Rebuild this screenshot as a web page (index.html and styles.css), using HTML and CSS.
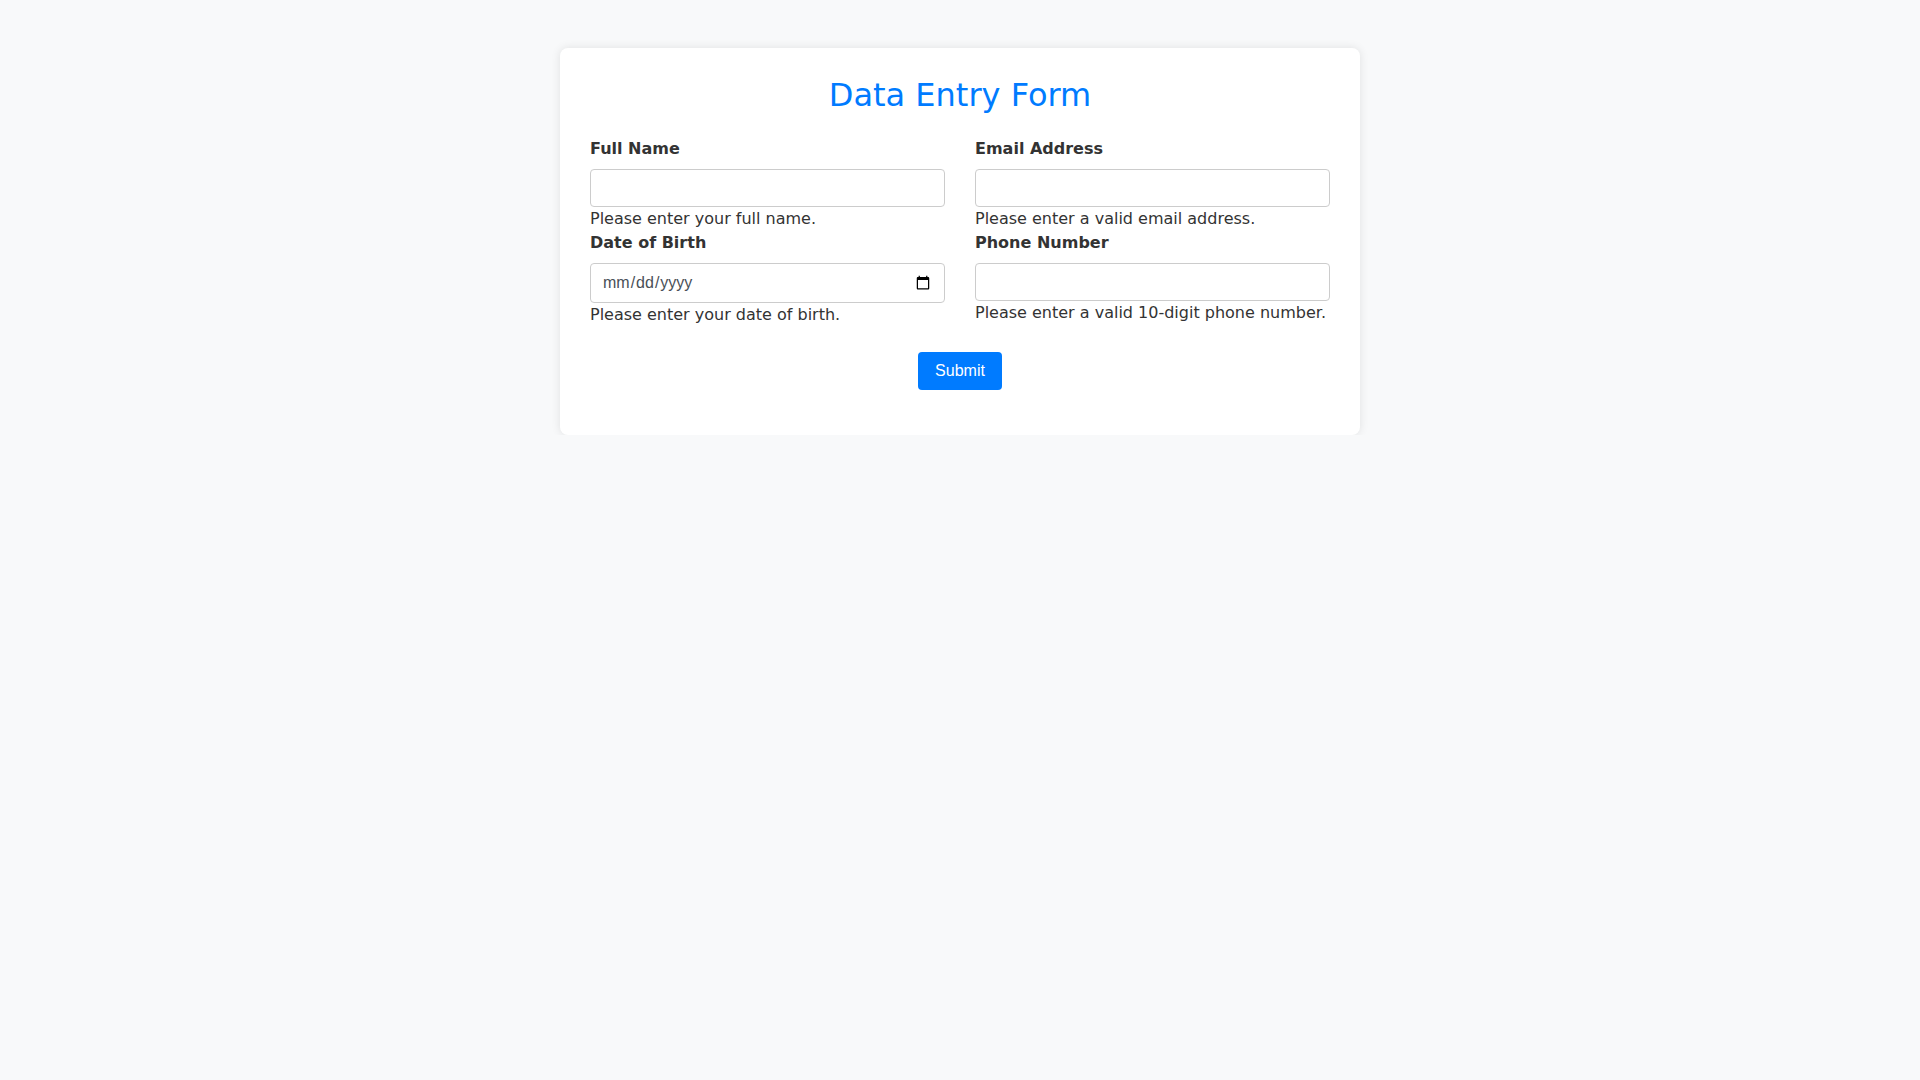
FILE: index.html
```html
<!DOCTYPE html>
<html lang="en">
<head>
<meta charset="utf-8">
<title>Data Entry Form</title>
<link rel="stylesheet" href="styles.css">
</head>
<body>
<div class="card">
  <h2 class="title">Data Entry Form</h2>
  <form class="form">
    <div class="grid">
      <div class="group">
        <label class="label" for="name">Full Name</label>
        <input class="field" type="text" id="name">
        <div class="help">Please enter your full name.</div>
      </div>
      <div class="group">
        <label class="label" for="email">Email Address</label>
        <input class="field" type="email" id="email">
        <div class="help">Please enter a valid email address.</div>
      </div>
      <div class="group">
        <label class="label" for="dob">Date of Birth</label>
        <input class="field" type="date" id="dob">
        <div class="help">Please enter your date of birth.</div>
      </div>
      <div class="group">
        <label class="label" for="phone">Phone Number</label>
        <input class="field" type="tel" id="phone">
        <div class="help">Please enter a valid 10-digit phone number.</div>
      </div>
    </div>
    <div class="actions">
      <button class="submit" type="button">Submit</button>
    </div>
  </form>
</div>
</body>
</html>
```

FILE: styles.css
```css
html, body {
  margin: 0;
  padding: 0;
}

body {
  background: #f8f9fa;
  font-family: "DejaVu Sans", Verdana, sans-serif;
  font-size: 16px;
  line-height: 1.5;
  color: #333333;
}

.card {
  box-sizing: border-box;
  width: 800px;
  margin: 48px auto 0;
  padding: 27.5px 30px 45.5px;
  background: #ffffff;
  border-radius: 8px;
  box-shadow: 0 0 10px rgba(0, 0, 0, 0.1);
}

.title {
  margin: 0 0 23.5px;
  font-size: 32px;
  font-weight: normal;
  line-height: 1.2;
  color: #007bff;
  text-align: center;
}

.form {
  margin: 0;
}

.grid {
  display: grid;
  grid-template-columns: 1fr 1fr;
  column-gap: 30px;
}

.label {
  display: block;
  font-weight: bold;
  margin-bottom: 8px;
}

.field {
  display: block;
  box-sizing: border-box;
  width: 100%;
  margin: 0;
  padding: 8px 11px;
  border: 1px solid #cccccc;
  border-radius: 4px;
  background: #ffffff;
  font-family: "Liberation Sans", Arial, sans-serif;
  font-size: 16px;
  line-height: 20px;
  color: #495057;
}

.help {
  font-size: 16px;
  line-height: 24px;
  color: #333333;
}

.actions {
  margin-top: 24.5px;
  text-align: center;
}

.submit {
  padding: 10px 17px;
  border: none;
  border-radius: 4px;
  background: #007bff;
  color: #ffffff;
  font-family: "Liberation Sans", Arial, sans-serif;
  font-size: 16px;
  line-height: 18px;
  cursor: pointer;
}
```
